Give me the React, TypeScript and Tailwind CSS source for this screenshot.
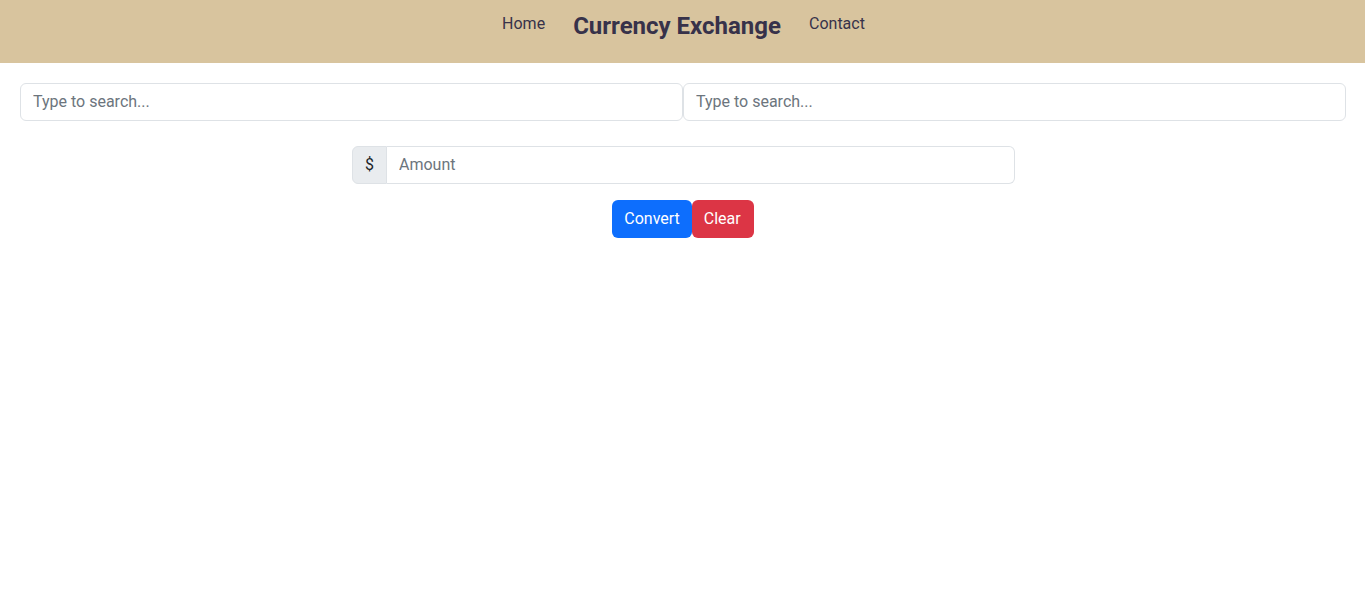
import React from 'react';

export default function App() {
  return (
    <div className="min-h-screen bg-white font-['Roboto',_'Liberation_Sans',_sans-serif] text-[#212529]">
      {/* Header */}
      <header className="h-[63px] bg-[#d8c49e] flex justify-center items-start gap-7 pl-[2px] text-[#37324a]">
        <a className="mt-[12px] text-base leading-6 cursor-pointer">Home</a>
        <h1 className="mt-[8px] text-2xl leading-9 font-bold">Currency Exchange</h1>
        <a className="mt-[12px] text-base leading-6 cursor-pointer">Contact</a>
      </header>

      {/* Search inputs */}
      <div className="flex pl-5 pr-[19px] mt-5">
        <input
          type="text"
          placeholder="Type to search..."
          className="w-1/2 py-[6px] px-3 text-base leading-6 border border-[#dee2e6] rounded-md outline-none placeholder:text-[#6c757d]"
        />
        <input
          type="text"
          placeholder="Type to search..."
          className="w-1/2 py-[6px] px-3 text-base leading-6 border border-[#dee2e6] rounded-md outline-none placeholder:text-[#6c757d]"
        />
      </div>

      {/* Amount */}
      <div className="flex justify-center pl-[2px] mt-[25px]">
        <div className="flex w-[663px]">
          <span className="w-[35px] py-[6px] flex items-center justify-center bg-[#e9ecef] border border-[#dee2e6] rounded-l-md text-base leading-6">
            $
          </span>
          <input
            type="text"
            placeholder="Amount"
            className="flex-1 py-[6px] px-3 text-base leading-6 border border-l-0 border-[#dee2e6] rounded-r-md outline-none placeholder:text-[#6c757d]"
          />
        </div>
      </div>

      {/* Buttons */}
      <div className="flex justify-center pl-[1px] mt-4">
        <button className="h-[38px] px-3 bg-[#0d6efd] text-white text-base leading-6 rounded-md">Convert</button>
        <button className="h-[38px] pl-3 pr-[13px] bg-[#dc3545] text-white text-base leading-6 rounded-md">Clear</button>
      </div>
    </div>
  );
}
